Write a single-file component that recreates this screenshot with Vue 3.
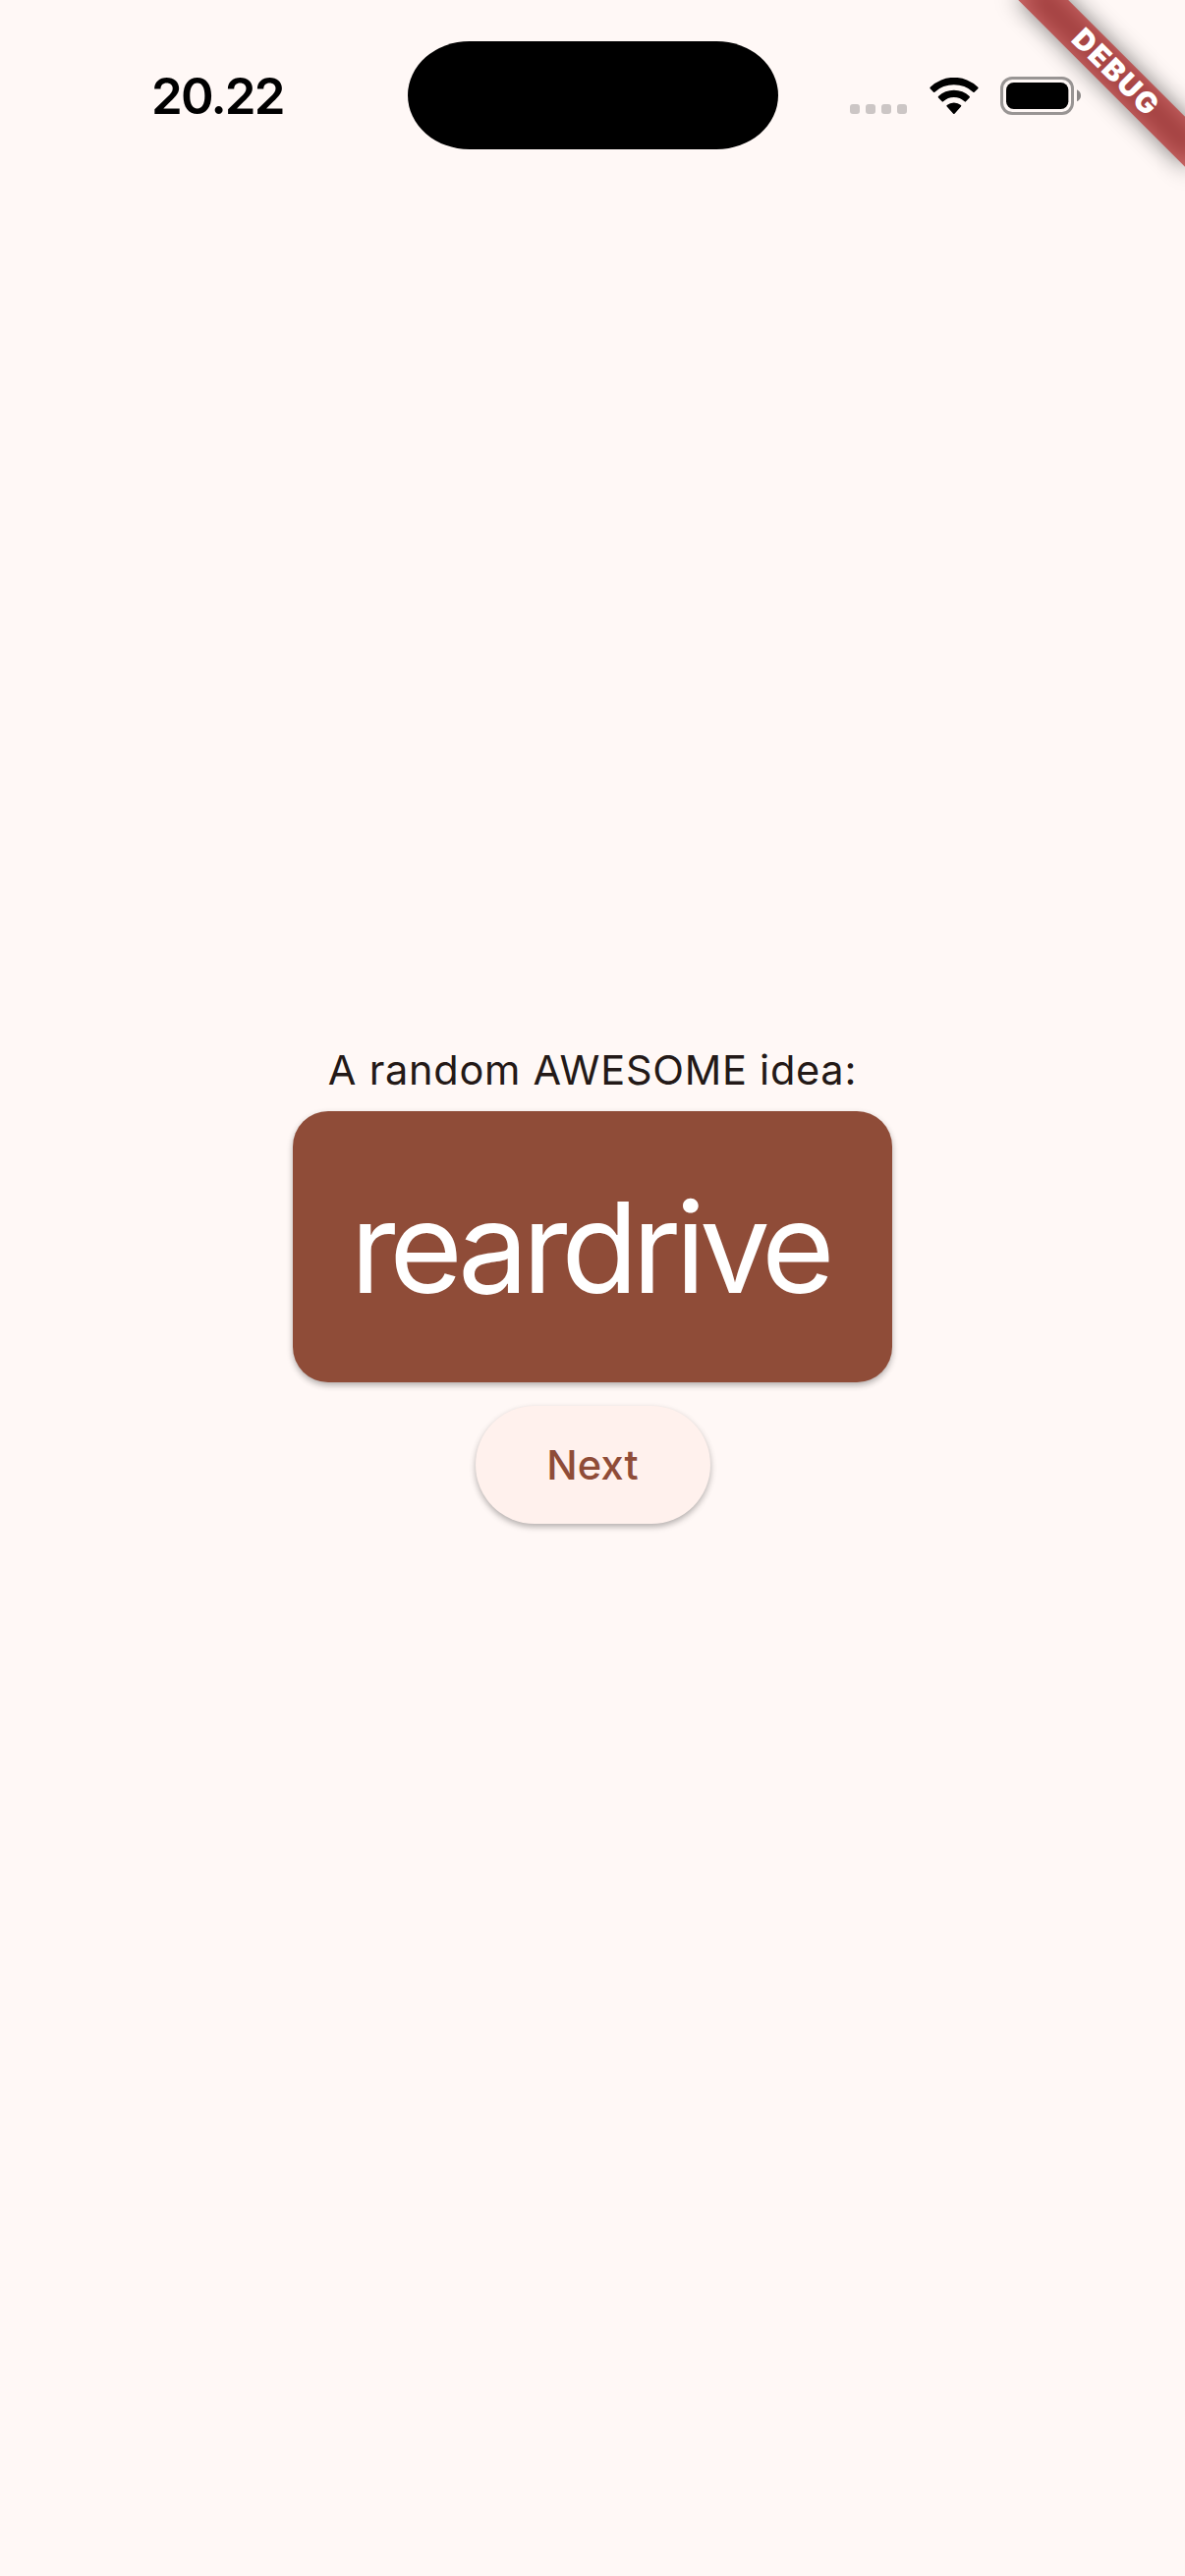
<script setup>
import { ref } from 'vue'

const words = ['reardrive', 'bluesky', 'oldtown', 'fastboat']
const index = ref(0)

function next() {
  index.value = (index.value + 1) % words.length
}
</script>

<template>
  <div class="screen">
    <header class="status">
      <div class="side left"><span class="time">20.22</span></div>
      <div class="island"></div>
      <div class="side right">
        <div class="signal"><i></i><i></i><i></i><i></i></div>
        <svg class="wifi" viewBox="0 0 150 114" aria-hidden="true">
          <path d="M2 29Q0 31.500 2 33.500L12 44Q14 46 16 44A87 87 0 0 1 133 44Q135 46 137 44L148 33.500Q150 31.500 148 29A105 105 0 0 0 2 29Z" />
          <path d="M27 57Q25 59.500 27 61.500L38 73Q40 75 42 73A48 48 0 0 1 107 73Q109 75 111 73L122 61.500Q124 59.500 122 57A69 69 0 0 0 27 57Z" />
          <path d="M53 84Q51 86.500 53 88.500L72.500 110Q74.500 112 76.500 110L96 88.500Q98 86.500 96 84A34 34 0 0 0 53 84Z" />
        </svg>
        <svg class="battery" viewBox="0 0 246 117" aria-hidden="true">
          <rect x="4.500" y="4.500" width="216" height="108" rx="32" fill="none" stroke="#999594" stroke-width="9" />
          <rect x="18" y="18" width="190" height="81" rx="23" />
          <path d="M234 40Q246 46 246 58T234 76Z" fill="#8c8887" />
        </svg>
      </div>
    </header>

    <main class="content">
      <p class="label">A random AWESOME idea:</p>
      <div class="card"><span class="word">{{ words[index] }}</span></div>
      <button class="next" type="button" @click="next"><span>Next</span></button>
    </main>

    <div class="banner">
      <div class="banner-shadow"></div>
      <div class="banner-band"><span>DEBUG</span></div>
    </div>
  </div>
</template>

<style>
body {
  margin: 0;
  background: #fff8f6;
}
</style>

<style scoped>
.screen {
  position: relative;
  display: grid;
  width: 1206px;
  height: 2622px;
  overflow: hidden;
  background: #fff8f6;
  font-family: Inter, "Liberation Sans", sans-serif;
}

.status,
.content {
  grid-area: 1 / 1;
}

.status {
  display: flex;
  align-self: start;
  align-items: center;
  padding-top: 41.5px;
  height: 111px;
}

.island {
  flex: none;
  width: 377px;
  height: 110.5px;
  border-radius: 63px / 55.25px;
  background: #000;
}

.side {
  display: flex;
  flex: 1;
  align-items: center;
}

.time {
  padding: 2px 0 0 154px;
  font-size: 51px;
  font-weight: 600;
  line-height: 60px;
  letter-spacing: -1.8px;
}

.right {
  padding-top: 1px;
}

.signal {
  display: flex;
  gap: 6px;
  margin: 27px 0 0 73.5px;
}

.signal i {
  width: 10px;
  height: 10px;
  border-radius: 3px;
  background: #ccc6c5;
}

.wifi {
  width: 50px;
  height: 38px;
  margin-left: 22.5px;
}

.battery {
  width: 82px;
  height: 39px;
  margin-left: 22.3px;
}

.content {
  display: flex;
  flex-direction: column;
  align-items: center;
  justify-content: center;
}

.label {
  margin: 0;
  color: #231917;
  font-size: 41.5px;
  line-height: 60px;
  letter-spacing: 0.74px;
  white-space: nowrap;
}

.card {
  display: flex;
  align-items: center;
  justify-content: center;
  box-sizing: border-box;
  width: 609.5px;
  height: 276px;
  margin: 12px;
  border-radius: 36px;
  background: #8f4c38;
  box-shadow: 0 3px 6px rgba(0, 0, 0, 0.3);
}

.word {
  margin-right: 6px;
  padding-top: 1px;
  color: #fff;
  font-size: 128px;
  line-height: 156px;
  letter-spacing: -6.3px;
}

.next {
  width: 239px;
  height: 120px;
  margin: 12px 0;
  padding: 0;
  border: 0;
  border-radius: 60px;
  background: #fff1ed;
  box-shadow: 0 3px 6px rgba(0, 0, 0, 0.3);
  color: #8f4c38;
  font-family: inherit;
  font-size: 41.5px;
  font-weight: 500;
  line-height: 60px;
  letter-spacing: 0.2px;
}

/* Corner ribbon laid over the top-right of the screen */
.banner {
  position: absolute;
  top: 84px;
  right: -120px;
  width: 240px;
  height: 36px;
  transform: rotate(45deg);
  transform-origin: 120px -84px;
}

.banner-shadow {
  position: absolute;
  inset: 0;
  background: rgba(0, 0, 0, 0.5);
  filter: blur(11.9px);
}

.banner-band {
  position: relative;
  box-sizing: border-box;
  height: 36px;
  padding-left: 5px;
  background: rgba(183, 28, 28, 0.627);
  color: #fff;
  font-size: 29.5px;
  font-weight: 900;
  line-height: 35px;
  letter-spacing: 1.8px;
  text-align: center;
}
</style>
